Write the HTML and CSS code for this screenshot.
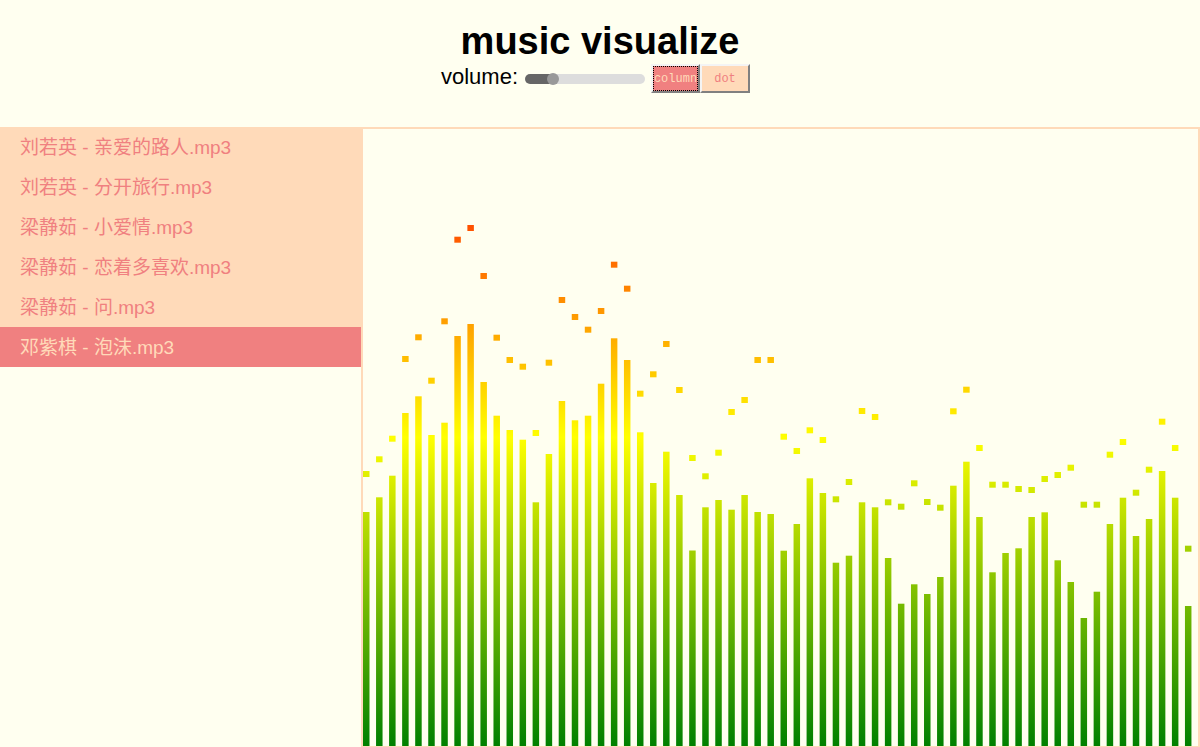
FILE: index.html
```html
<!DOCTYPE html>
<html lang="zh">
<head>
<meta charset="utf-8">
<title>music visualize</title>
<link rel="stylesheet" href="styles.css">
</head>
<body>
<header class="header">
  <h1 class="title">music visualize</h1>
  <div class="controls">
    <span class="label">volume:</span>
    <input class="volume" type="range" min="0" max="100" value="20">
    <div class="modes">
      <button class="btn btn-active btn-column" type="button">column</button><button class="btn btn-dot" type="button">dot</button>
    </div>
  </div>
</header>
<main class="main">
  <ul class="playlist">
    <li class="song">刘若英 - 亲爱的路人.mp3</li>
    <li class="song">刘若英 - 分开旅行.mp3</li>
    <li class="song">梁静茹 - 小爱情.mp3</li>
    <li class="song">梁静茹 - 恋着多喜欢.mp3</li>
    <li class="song">梁静茹 - 问.mp3</li>
    <li class="song song-active">邓紫棋 - 泡沫.mp3</li>
  </ul>
  <div class="stage">
    <svg class="viz" width="835" height="617" viewBox="0 0 835 617" xmlns="http://www.w3.org/2000/svg">
      <defs>
        <linearGradient id="g" gradientUnits="userSpaceOnUse" x1="0" y1="0" x2="0" y2="617">
          <stop offset="0" stop-color="#ff0000"/>
          <stop offset="0.5" stop-color="#ffff00"/>
          <stop offset="1" stop-color="#008000"/>
        </linearGradient>
      </defs>
      <g fill="url(#g)">
        <rect x="0" y="383" width="6.5" height="234"/>
        <rect x="13.05" y="368.3" width="6.5" height="248.7"/>
        <rect x="26.09" y="346.7" width="6.5" height="270.3"/>
        <rect x="39.14" y="284" width="6.5" height="333"/>
        <rect x="52.19" y="267.3" width="6.5" height="349.7"/>
        <rect x="65.23" y="306" width="6.5" height="311"/>
        <rect x="78.28" y="293.7" width="6.5" height="323.3"/>
        <rect x="91.33" y="207" width="6.5" height="410"/>
        <rect x="104.38" y="195" width="6.5" height="422"/>
        <rect x="117.42" y="253" width="6.5" height="364"/>
        <rect x="130.47" y="286.7" width="6.5" height="330.3"/>
        <rect x="143.52" y="301" width="6.5" height="316"/>
        <rect x="156.56" y="310.7" width="6.5" height="306.3"/>
        <rect x="169.61" y="373.3" width="6.5" height="243.7"/>
        <rect x="182.66" y="325" width="6.5" height="292"/>
        <rect x="195.70" y="272" width="6.5" height="345"/>
        <rect x="208.75" y="291.3" width="6.5" height="325.7"/>
        <rect x="221.80" y="286.7" width="6.5" height="330.3"/>
        <rect x="234.84" y="254.7" width="6.5" height="362.3"/>
        <rect x="247.89" y="209.3" width="6.5" height="407.7"/>
        <rect x="260.94" y="231" width="6.5" height="386"/>
        <rect x="273.98" y="303.3" width="6.5" height="313.7"/>
        <rect x="287.03" y="354" width="6.5" height="263"/>
        <rect x="300.08" y="322.7" width="6.5" height="294.3"/>
        <rect x="313.13" y="366" width="6.5" height="251"/>
        <rect x="326.17" y="421.5" width="6.5" height="195.5"/>
        <rect x="339.22" y="378.3" width="6.5" height="238.7"/>
        <rect x="352.27" y="371" width="6.5" height="246"/>
        <rect x="365.31" y="380.7" width="6.5" height="236.3"/>
        <rect x="378.36" y="366" width="6.5" height="251"/>
        <rect x="391.41" y="383" width="6.5" height="234"/>
        <rect x="404.45" y="385" width="6.5" height="232"/>
        <rect x="417.50" y="421.7" width="6.5" height="195.3"/>
        <rect x="430.55" y="395" width="6.5" height="222"/>
        <rect x="443.59" y="349.3" width="6.5" height="267.7"/>
        <rect x="456.64" y="364" width="6.5" height="253"/>
        <rect x="469.69" y="433.7" width="6.5" height="183.3"/>
        <rect x="482.73" y="426.7" width="6.5" height="190.3"/>
        <rect x="495.78" y="373.3" width="6.5" height="243.7"/>
        <rect x="508.83" y="378.3" width="6.5" height="238.7"/>
        <rect x="521.88" y="429" width="6.5" height="188"/>
        <rect x="534.92" y="474.7" width="6.5" height="142.3"/>
        <rect x="547.97" y="455.3" width="6.5" height="161.7"/>
        <rect x="561.02" y="465" width="6.5" height="152"/>
        <rect x="574.06" y="448" width="6.5" height="169"/>
        <rect x="587.11" y="356.7" width="6.5" height="260.3"/>
        <rect x="600.16" y="332.7" width="6.5" height="284.3"/>
        <rect x="613.20" y="388" width="6.5" height="229"/>
        <rect x="626.25" y="443.3" width="6.5" height="173.7"/>
        <rect x="639.30" y="424" width="6.5" height="193"/>
        <rect x="652.34" y="419.3" width="6.5" height="197.7"/>
        <rect x="665.39" y="388" width="6.5" height="229"/>
        <rect x="678.44" y="383.3" width="6.5" height="233.7"/>
        <rect x="691.48" y="431.3" width="6.5" height="185.7"/>
        <rect x="704.53" y="453" width="6.5" height="164"/>
        <rect x="717.58" y="489" width="6.5" height="128"/>
        <rect x="730.63" y="462.7" width="6.5" height="154.3"/>
        <rect x="743.67" y="395" width="6.5" height="222"/>
        <rect x="756.72" y="368.7" width="6.5" height="248.3"/>
        <rect x="769.77" y="407" width="6.5" height="210"/>
        <rect x="782.81" y="390" width="6.5" height="227"/>
        <rect x="795.86" y="342" width="6.5" height="275"/>
        <rect x="808.91" y="368.7" width="6.5" height="248.3"/>
        <rect x="821.95" y="477" width="6.5" height="140"/>
      </g>
      <g fill="url(#g)">
        <rect x="0" y="342" width="6.5" height="6"/>
        <rect x="13.05" y="327.3" width="6.5" height="6"/>
        <rect x="26.09" y="306.7" width="6.5" height="6"/>
        <rect x="39.14" y="227" width="6.5" height="6"/>
        <rect x="52.19" y="205.3" width="6.5" height="6"/>
        <rect x="65.23" y="248.7" width="6.5" height="6"/>
        <rect x="78.28" y="189.3" width="6.5" height="6"/>
        <rect x="91.33" y="107.7" width="6.5" height="6"/>
        <rect x="104.38" y="96" width="6.5" height="6"/>
        <rect x="117.42" y="144" width="6.5" height="6"/>
        <rect x="130.47" y="205.7" width="6.5" height="6"/>
        <rect x="143.52" y="228" width="6.5" height="6"/>
        <rect x="156.56" y="234.7" width="6.5" height="6"/>
        <rect x="169.61" y="301" width="6.5" height="6"/>
        <rect x="182.66" y="230.7" width="6.5" height="6"/>
        <rect x="195.70" y="168" width="6.5" height="6"/>
        <rect x="208.75" y="185" width="6.5" height="6"/>
        <rect x="221.80" y="197.7" width="6.5" height="6"/>
        <rect x="234.84" y="179" width="6.5" height="6"/>
        <rect x="247.89" y="132.7" width="6.5" height="6"/>
        <rect x="260.94" y="156.7" width="6.5" height="6"/>
        <rect x="273.98" y="261.7" width="6.5" height="6"/>
        <rect x="287.03" y="242.3" width="6.5" height="6"/>
        <rect x="300.08" y="212" width="6.5" height="6"/>
        <rect x="313.13" y="258" width="6.5" height="6"/>
        <rect x="326.17" y="326" width="6.5" height="6"/>
        <rect x="339.22" y="344.3" width="6.5" height="6"/>
        <rect x="352.27" y="320.7" width="6.5" height="6"/>
        <rect x="365.31" y="280" width="6.5" height="6"/>
        <rect x="378.36" y="268" width="6.5" height="6"/>
        <rect x="391.41" y="228" width="6.5" height="6"/>
        <rect x="404.45" y="228" width="6.5" height="6"/>
        <rect x="417.50" y="304.7" width="6.5" height="6"/>
        <rect x="430.55" y="319" width="6.5" height="6"/>
        <rect x="443.59" y="298.3" width="6.5" height="6"/>
        <rect x="456.64" y="308" width="6.5" height="6"/>
        <rect x="469.69" y="367.3" width="6.5" height="6"/>
        <rect x="482.73" y="350" width="6.5" height="6"/>
        <rect x="495.78" y="279" width="6.5" height="6"/>
        <rect x="508.83" y="285" width="6.5" height="6"/>
        <rect x="521.88" y="370.3" width="6.5" height="6"/>
        <rect x="534.92" y="374.7" width="6.5" height="6"/>
        <rect x="547.97" y="351.3" width="6.5" height="6"/>
        <rect x="561.02" y="370" width="6.5" height="6"/>
        <rect x="574.06" y="375.7" width="6.5" height="6"/>
        <rect x="587.11" y="279.3" width="6.5" height="6"/>
        <rect x="600.16" y="257.7" width="6.5" height="6"/>
        <rect x="613.20" y="316" width="6.5" height="6"/>
        <rect x="626.25" y="352.7" width="6.5" height="6"/>
        <rect x="639.30" y="352.7" width="6.5" height="6"/>
        <rect x="652.34" y="357" width="6.5" height="6"/>
        <rect x="665.39" y="358" width="6.5" height="6"/>
        <rect x="678.44" y="347" width="6.5" height="6"/>
        <rect x="691.48" y="343" width="6.5" height="6"/>
        <rect x="704.53" y="335.7" width="6.5" height="6"/>
        <rect x="717.58" y="372.7" width="6.5" height="6"/>
        <rect x="730.63" y="372.7" width="6.5" height="6"/>
        <rect x="743.67" y="322.7" width="6.5" height="6"/>
        <rect x="756.72" y="310" width="6.5" height="6"/>
        <rect x="769.77" y="360.7" width="6.5" height="6"/>
        <rect x="782.81" y="337.7" width="6.5" height="6"/>
        <rect x="795.86" y="289.7" width="6.5" height="6"/>
        <rect x="808.91" y="316" width="6.5" height="6"/>
        <rect x="821.95" y="416.7" width="6.5" height="6"/>
      </g>
    </svg>
  </div>
</main>
</body>
</html>
```

FILE: styles.css
```css
html, body {
  margin: 0;
  padding: 0;
}

body {
  background: #fffff0;
  font-family: "Liberation Sans", Arial, "Noto Sans CJK SC", sans-serif;
  color: #000;
}

.header {
  height: 127px;
  display: flex;
  flex-direction: column;
  align-items: center;
}

.title {
  margin: 0;
  padding-top: 19px;
  font-size: 38px;
  line-height: 44px;
  font-weight: bold;
}

.controls {
  margin-top: 1px;
  height: 29px;
  display: flex;
  align-items: center;
  padding-right: 9px;
}

.label {
  font-size: 22px;
  line-height: 24px;
  margin-bottom: 3px;
  margin-right: 7px;
}

.volume {
  -webkit-appearance: none;
  appearance: none;
  width: 120px;
  height: 10px;
  margin: 0 6px 0 0;
  padding: 0;
  border-radius: 5px;
  background: linear-gradient(to right, #666666 0, #666666 28px, #dddddd 28px, #dddddd 100%);
  outline: none;
}

.volume::-webkit-slider-thumb {
  -webkit-appearance: none;
  appearance: none;
  width: 12px;
  height: 12px;
  border-radius: 50%;
  background: #999999;
  border: none;
}

.modes {
  display: flex;
}

.btn {
  height: 29px;
  padding: 0;
  margin: 0;
  font-family: "Liberation Mono", "Courier New", monospace;
  font-size: 12px;
  background: #ffdab9;
  color: #f08080;
  border-style: solid;
  border-width: 2px;
  border-color: #f4f4f4 #808080 #808080 #f4f4f4;
}

.btn-column {
  width: 49px;
}

.btn-dot {
  width: 50px;
}

.btn-active {
  background: #f08080;
  color: #ffdab9;
  outline: 1px dotted #000;
  outline-offset: -3px;
}

.main {
  display: flex;
  align-items: flex-start;
}

.playlist {
  width: 361px;
  margin: 0;
  padding: 0;
  list-style: none;
  flex: none;
}

.song {
  height: 40px;
  line-height: 42px;
  padding-left: 20px;
  font-size: 19px;
  color: #f08080;
  background: #ffdab9;
  white-space: nowrap;
  overflow: hidden;
}

.song-active {
  background: #f08080;
  color: #ffdab9;
}

.stage {
  flex: 1;
  border: 2px solid #ffdab9;
  height: 617px;
}

.viz {
  display: block;
}
```
